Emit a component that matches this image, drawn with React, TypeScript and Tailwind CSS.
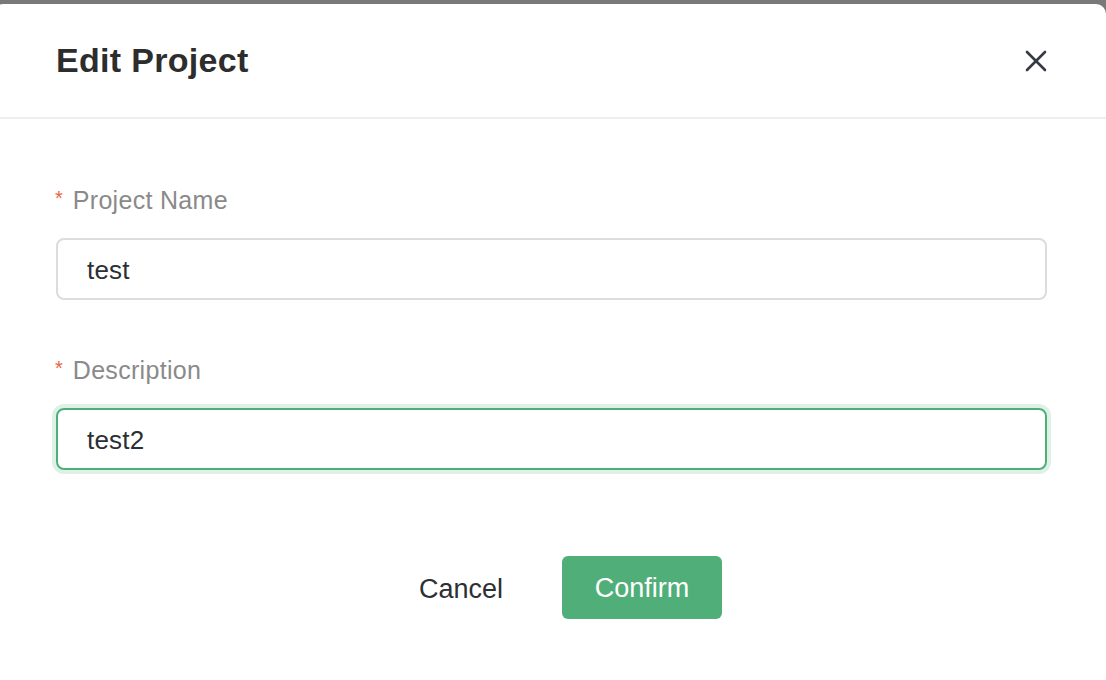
import React from "react";

const font = { fontFamily: '"Liberation Sans", Arial, sans-serif' };

function Field({ label, value, focused }: { label: string; value: string; focused?: boolean }) {
  return (
    <div>
      <div className="flex items-start h-[32px] mb-[22px]">
        <span className="text-[#e8643c] text-[20px] leading-[28px] mr-[10px] -ml-[1px]">*</span>
        <span className="text-[#8a8a8a] text-[25px] leading-[32px] tracking-[0.3px]">{label}</span>
      </div>
      <div
        className={
          focused
            ? "h-[62px] rounded-[8px] border-2 border-[#4dae78] ring-4 ring-[#dff1e6] flex items-center pl-[29px]"
            : "h-[62px] rounded-[8px] border-2 border-[#dcdce0] flex items-center pl-[29px]"
        }
      >
        <span className="text-[#2b2f36] text-[26px] tracking-[0.2px] mt-[2px]">{value}</span>
      </div>
    </div>
  );
}

export default function App() {
  return (
    <div className="w-full h-[680px] overflow-hidden bg-[#77797b] pt-[4px]" style={font}>
      <div className="ml-[-7px] h-full bg-white rounded-t-[10px]">
        {/* header */}
        <div className="h-[115px] flex items-center justify-between pl-[63px] pr-[59px] border-b-2 border-[#eceef1]">
          <h1 className="text-[34px] font-bold text-[#2d2d2d] tracking-[0.3px]">Edit Project</h1>
          <button className="w-[24px] h-[24px] -mr-[1px] mt-[1px] flex items-center justify-center">
            <svg width="22" height="22" viewBox="0 0 22 22" fill="none" stroke="#363a42" strokeWidth="2.6" strokeLinecap="round">
              <line x1="2" y1="2" x2="20" y2="20" />
              <line x1="20" y1="2" x2="2" y2="20" />
            </svg>
          </button>
        </div>

        {/* body */}
        <div className="pl-[63px] pr-[59px] pt-[65px]">
          <div className="mb-[54px]">
            <Field label="Project Name" value="test" />
          </div>
          <Field label="Description" value="test2" focused />

          <div className="flex justify-center gap-[28px] mt-[86px] ml-[7px]">
            <button className="w-[146px] h-[63px] text-[27px] text-[#2d2f34] pt-[4px]">Cancel</button>
            <button className="w-[160px] h-[63px] rounded-[6px] bg-[#50af79] text-white text-[27px] pt-[2px]">Confirm</button>
          </div>
        </div>
      </div>
    </div>
  );
}
